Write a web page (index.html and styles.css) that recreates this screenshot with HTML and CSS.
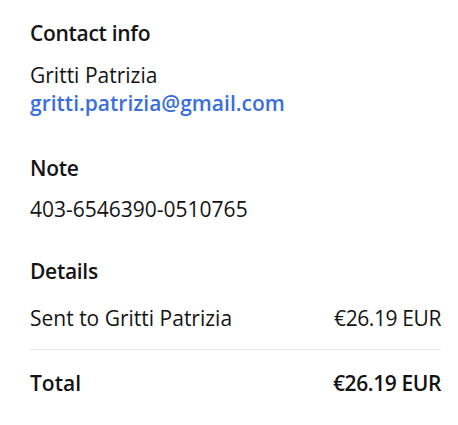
FILE: index.html
```html
<!DOCTYPE html>
<html>
<head>
<meta charset="utf-8">
<link rel="stylesheet" href="styles.css">
</head>
<body>
<div class="panel">
  <section class="sec contact">
    <h2 class="title">Contact info</h2>
    <div class="line">Gritti Patrizia</div>
    <a class="line link" href="#">gritti.patrizia@gmail.com</a>
  </section>
  <section class="sec note">
    <h2 class="title">Note</h2>
    <div class="line">403-6546390-0510765</div>
  </section>
  <section class="sec details">
    <h2 class="title title-details">Details</h2>
    <div class="row">
      <span>Sent to Gritti Patrizia</span>
      <span class="amount">€26.19 EUR</span>
    </div>
    <div class="row total">
      <span>Total</span>
      <span class="amount">€26.19 EUR</span>
    </div>
  </section>
</div>
</body>
</html>
```
FILE: styles.css
```css
html, body {
  margin: 0;
  padding: 0;
  background: #ffffff;
}
body {
  font-family: "Open Sans", "Noto Sans", sans-serif;
  font-size: 21px;
  line-height: 28px;
  color: #141414;
}
.panel {
  padding: 19px 17px 0 30px;
}
.sec {
  display: flex;
  flex-direction: column;
}
.title {
  margin: 0 0 14px 0;
  font-size: 21px;
  font-weight: 600;
  line-height: 28px;
  letter-spacing: -0.3px;
}
.line {
  display: block;
}
.link {
  color: #3b6fdb;
  font-weight: 600;
  text-decoration: none;
}
.note {
  margin-top: 37px;
}
.note .title {
  margin-bottom: 13px;
}
.details {
  margin-top: 34px;
}
.title-details {
  margin-bottom: 19px;
}
.row {
  display: flex;
  justify-content: space-between;
}
.amount {
  letter-spacing: -0.4px;
}
.row:first-of-type {
  padding-bottom: 17px;
}
.total {
  border-top: 1px solid #e6e6e6;
  padding-top: 19px;
  font-weight: 600;
}
```
